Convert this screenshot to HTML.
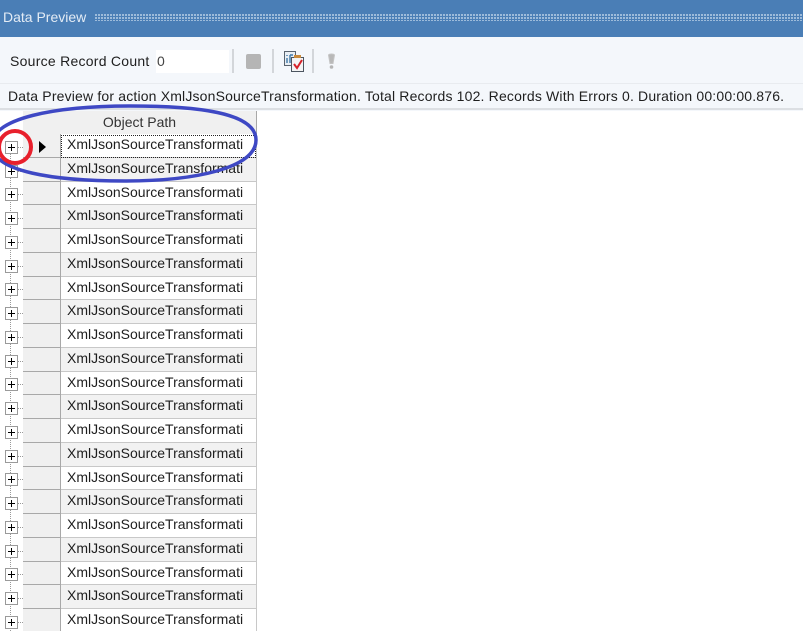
<!DOCTYPE html>
<html><head><meta charset="utf-8"><style>
html,body{margin:0;padding:0;background:#fff}
body{width:803px;height:631px;position:relative;overflow:hidden;font-family:"Liberation Sans",sans-serif;color:#1e1e1e}
#w{position:absolute;left:0;top:0;width:803px;height:631px;overflow:hidden;filter:blur(.35px)}
.a{position:absolute;white-space:nowrap}
.r{position:absolute;left:23px;width:234px;height:24px}
.n{height:23px}
.r i{position:absolute;left:0;top:0;bottom:0;width:38px;box-sizing:border-box;background:#f0f0f0;border-right:1px solid #a8a8a8;border-bottom:1px solid #a8a8a8}
.r b{position:absolute;left:38px;top:0;bottom:0;width:196px;box-sizing:border-box;background:#fff;border-right:1px solid #c8c8c8;border-bottom:1px solid #c8c8c8;font:14px/20px "Liberation Sans",sans-serif;text-indent:6px;overflow:hidden}
.r.e b{background:#f2f2f2}
.p{position:absolute;left:5px;width:11px;height:11px;border:1px solid #9a9a9a;background:#fff}
.p:before{content:"";position:absolute;left:2px;top:5px;width:7px;height:1px;background:#000}
.p:after{content:"";position:absolute;left:5px;top:2px;width:1px;height:7px;background:#000}
.d{position:absolute;left:18px;width:5px;height:0;border-top:1px dotted #999}
</style></head><body><div id="w">
<div class="a" style="left:0;top:0;width:803px;height:37px;background:#4a7eb6"></div>
<div class="a" style="left:3px;top:8px;font-size:14px;line-height:18px;color:#e4ecf5">Data Preview</div>
<div class="a" style="left:95px;top:14px;width:708px;height:7px;background-image:radial-gradient(circle at 1px 1px,#b9cfe6 0.9px,transparent 1px);background-size:3px 3px"></div>
<div class="a" style="left:0;top:37px;width:803px;height:74px;background:#f4f7fb"></div>
<div class="a" style="left:0;top:83px;width:803px;height:1px;background:#e8ebef"></div>
<div class="a" style="left:0;top:108px;width:803px;height:2px;background:#dcdfe3"></div>
<div class="a" style="left:10px;top:52px;font-size:14px;line-height:18px;letter-spacing:.26px">Source Record Count</div>
<div class="a" style="left:156px;top:50px;width:73px;height:23px;background:#fff"></div>
<div class="a" style="left:157px;top:52px;font-size:14px;line-height:18px;color:#444">0</div>
<div class="a" style="left:232px;top:49px;width:2px;height:24px;background:#d3d6da"></div>
<div class="a" style="left:246px;top:54px;width:15px;height:15px;background:#b5b5b5;border-radius:2px"></div>
<div class="a" style="left:272px;top:49px;width:2px;height:24px;background:#d3d6da"></div>
<svg class="a" style="left:283px;top:50px" width="22" height="24" viewBox="0 0 22 24">
<rect x="1.5" y="1.5" width="11" height="14" fill="#e8eef4" stroke="#59636e"/>
<path d="M4 5v1M4 8v5M7 5v8M7 5h3" stroke="#3f78a8" stroke-width="1.4" fill="none"/>
<rect x="8.5" y="7.5" width="12" height="14" fill="#f4f4f4" stroke="#4c5560"/>
<rect x="11" y="5" width="7" height="3" fill="#c98a3c"/>
<path d="M11 14l3 4 5-8" stroke="#d6222a" stroke-width="2" fill="none"/>
</svg>
<div class="a" style="left:312px;top:49px;width:2px;height:24px;background:#d3d6da"></div>
<svg class="a" style="left:326px;top:53px" width="12" height="17" viewBox="0 0 12 17">
<path d="M2.5 2c1-1.300 5-1.300 6 0l-1.500 8.500h-3z" fill="#b8b8b8" stroke="#c4c4c4"/><circle cx="5.500" cy="14" r="1.800" fill="#b5b5b5"/>
</svg>
<div class="a" style="left:8px;top:87px;font-size:14px;line-height:18px;letter-spacing:.17px">Data Preview for action XmlJsonSourceTransformation. Total Records 102. Records With Errors 0. Duration 00:00:00.876.</div>

<div class="a" style="left:23px;top:111px;width:233px;height:23px;background:#f0f0f0;border-right:1px solid #a8a8a8;border-bottom:1px solid #a8a8a8"></div>
<div class="a" style="left:61px;top:113px;width:157px;text-align:center;font-size:14px;line-height:18px;color:#333">Object Path</div>

<div class="a" style="left:10px;top:146px;width:0;height:485px;border-left:1px dotted #999"></div>

<div class="r" style="top:134px"><i></i><b>XmlJsonSourceTransformati</b></div>
<div class="r e" style="top:158px"><i></i><b>XmlJsonSourceTransformati</b></div>
<div class="r n" style="top:182px"><i></i><b>XmlJsonSourceTransformati</b></div>
<div class="r e" style="top:205px"><i></i><b>XmlJsonSourceTransformati</b></div>
<div class="r" style="top:229px"><i></i><b>XmlJsonSourceTransformati</b></div>
<div class="r e" style="top:253px"><i></i><b>XmlJsonSourceTransformati</b></div>
<div class="r n" style="top:277px"><i></i><b>XmlJsonSourceTransformati</b></div>
<div class="r e" style="top:300px"><i></i><b>XmlJsonSourceTransformati</b></div>
<div class="r" style="top:324px"><i></i><b>XmlJsonSourceTransformati</b></div>
<div class="r e" style="top:348px"><i></i><b>XmlJsonSourceTransformati</b></div>
<div class="r n" style="top:372px"><i></i><b>XmlJsonSourceTransformati</b></div>
<div class="r e" style="top:395px"><i></i><b>XmlJsonSourceTransformati</b></div>
<div class="r" style="top:419px"><i></i><b>XmlJsonSourceTransformati</b></div>
<div class="r e" style="top:443px"><i></i><b>XmlJsonSourceTransformati</b></div>
<div class="r n" style="top:467px"><i></i><b>XmlJsonSourceTransformati</b></div>
<div class="r e" style="top:490px"><i></i><b>XmlJsonSourceTransformati</b></div>
<div class="r" style="top:514px"><i></i><b>XmlJsonSourceTransformati</b></div>
<div class="r e" style="top:538px"><i></i><b>XmlJsonSourceTransformati</b></div>
<div class="r n" style="top:562px"><i></i><b>XmlJsonSourceTransformati</b></div>
<div class="r e" style="top:585px"><i></i><b>XmlJsonSourceTransformati</b></div>
<div class="r" style="top:609px"><i></i><b>XmlJsonSourceTransformati</b></div>

<div class="p" style="top:141px"></div><div class="d" style="top:147px"></div>
<div class="p" style="top:165px"></div><div class="d" style="top:171px"></div>
<div class="p" style="top:188px"></div><div class="d" style="top:194px"></div>
<div class="p" style="top:212px"></div><div class="d" style="top:218px"></div>
<div class="p" style="top:236px"></div><div class="d" style="top:242px"></div>
<div class="p" style="top:260px"></div><div class="d" style="top:266px"></div>
<div class="p" style="top:283px"></div><div class="d" style="top:289px"></div>
<div class="p" style="top:307px"></div><div class="d" style="top:313px"></div>
<div class="p" style="top:331px"></div><div class="d" style="top:337px"></div>
<div class="p" style="top:355px"></div><div class="d" style="top:361px"></div>
<div class="p" style="top:378px"></div><div class="d" style="top:384px"></div>
<div class="p" style="top:402px"></div><div class="d" style="top:408px"></div>
<div class="p" style="top:426px"></div><div class="d" style="top:432px"></div>
<div class="p" style="top:450px"></div><div class="d" style="top:456px"></div>
<div class="p" style="top:473px"></div><div class="d" style="top:479px"></div>
<div class="p" style="top:497px"></div><div class="d" style="top:503px"></div>
<div class="p" style="top:521px"></div><div class="d" style="top:527px"></div>
<div class="p" style="top:545px"></div><div class="d" style="top:551px"></div>
<div class="p" style="top:568px"></div><div class="d" style="top:574px"></div>
<div class="p" style="top:592px"></div><div class="d" style="top:598px"></div>
<div class="p" style="top:616px"></div><div class="d" style="top:622px"></div>

<svg class="a" style="left:38px;top:140px" width="9" height="14" viewBox="0 0 9 14"><path d="M1 1l7 6-7 6z" fill="#000"/></svg>
<div class="a" style="left:61px;top:135px;width:193px;height:21px;border:1px dotted #222"></div>

<svg class="a" style="left:0;top:0" width="803" height="631" viewBox="0 0 803 631">
<path d="M130 106C195 106 256 112 256 140C256 168 195 181 125 181C55 181-8 172-8 145C-8 118 55 106 130 106Z" fill="none" stroke="#3e48c4" stroke-width="3.500"/>
<circle cx="15" cy="147" r="16" fill="none" stroke="#e8202c" stroke-width="4"/>
</svg>
</div></body></html>
